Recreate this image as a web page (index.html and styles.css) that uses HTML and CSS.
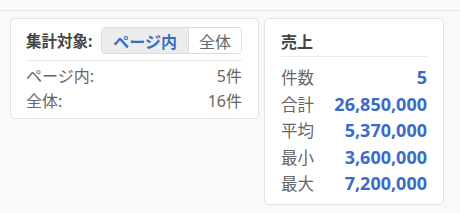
FILE: index.html
```html
<!DOCTYPE html>
<html lang="ja">
<head>
  <meta charset="UTF-8">
  <meta name="viewport" content="width=device-width, initial-scale=1.0">
  <title>集計</title>
  <link rel="stylesheet" href="styles.css">
</head>
<body>
  <div class="topbar"></div>

  <div class="cards">
    <!-- 集計対象 -->
    <section class="card scope">
      <div class="card-head">
        <span class="card-title">集計対象:</span>
        <div class="seg">
          <button class="on">ページ内</button>
          <button>全体</button>
        </div>
      </div>
      <div class="row"><span>ページ内:</span><span>5件</span></div>
      <div class="row"><span>全体:</span><span>16件</span></div>
    </section>

    <!-- 売上 -->
    <section class="card stats">
      <div class="card-head"><span class="card-title">売上</span></div>
      <div class="row"><span>件数</span><b>5</b></div>
      <div class="row"><span>合計</span><b>26,850,000</b></div>
      <div class="row"><span>平均</span><b>5,370,000</b></div>
      <div class="row"><span>最小</span><b>3,600,000</b></div>
      <div class="row"><span>最大</span><b>7,200,000</b></div>
    </section>
  </div>
</body>
</html>
```

FILE: styles.css
```css
body { margin:0; background:#f9f9f9; font-family:"Noto Sans", "Noto Sans CJK JP", sans-serif; color:#555; }
.topbar { height:10px; border-bottom:1px solid #e6e6e6; }
.cards { display:flex; align-items:flex-start; gap:5px; padding:7px 10px 0; }
.card { background:#fff; border:1px solid #e2e2e2; border-radius:5px; box-sizing:border-box; }
.card-title { font-weight:bold; color:#444; }

.scope { width:249px; padding:8px 16px 4px 15px; }
.scope .card-head { display:flex; align-items:center; justify-content:space-between; padding-bottom:6px; border-bottom:1px solid #ebebeb; margin-bottom:3px; }
.scope .card-title { font-size:15.5px; }
.seg { display:flex; border:1px solid #dcdcdc; border-radius:4px; overflow:hidden; height:27px; box-sizing:border-box; }
.seg button { border:0; background:#fff; font-family:inherit; font-size:16px; color:#666; padding:0 10px; cursor:pointer; }
.seg button.on { background:#ececec; color:#3a6cc6; font-weight:bold; padding:0 11px; border-right:1px solid #dcdcdc; }
.scope .row { display:flex; justify-content:space-between; height:25px; line-height:25px; font-size:16px; color:#666; }

.stats { width:180px; padding:13px 16px 7px; }
.stats .card-head { line-height:20px; font-size:16px; padding-bottom:4px; border-bottom:1px solid #ebebeb; margin-bottom:7px; }
.stats .row { display:flex; justify-content:space-between; align-items:center; height:26.5px; font-size:16.5px; color:#666; }
.stats .row b { font-size:18px; color:#3a6cc6; }
```
